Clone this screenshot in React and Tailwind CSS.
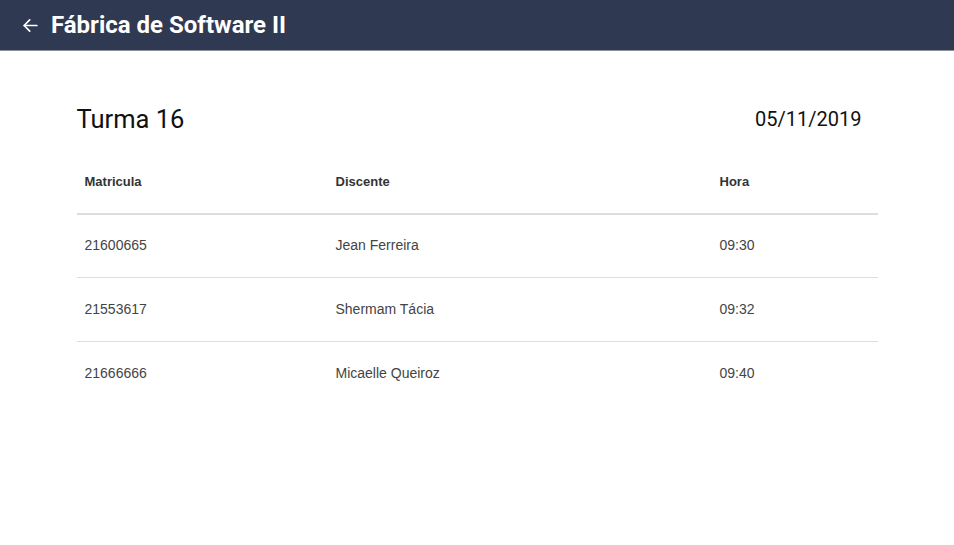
export default function App() {
  const rows = [
    ["21600665", "Jean Ferreira", "09:30"],
    ["21553617", "Shermam Tácia", "09:32"],
    ["21666666", "Micaelle Queiroz", "09:40"],
  ];
  return (
    <div className="min-h-[545px] w-full bg-white">
      <header className="flex h-[51px] items-center border-b border-[#8a8f9c] bg-[#2f3952] pl-[21px] text-white">
        <svg width="19" height="19" viewBox="0 0 24 24" className="mr-[11px]" fill="none" stroke="white" strokeWidth="2.2" strokeLinecap="round" strokeLinejoin="round">
          <path d="M20 12H4" />
          <path d="M11 5l-7 7 7 7" />
        </svg>
        <h1 className="text-[24px] font-bold font-['Roboto',sans-serif] leading-none">Fábrica de Software II</h1>
      </header>
      <main className="mx-auto w-[801px] pt-[53px]">
        <div className="flex items-center justify-between pr-[16px]">
          <h2 className="font-['Roboto',sans-serif] text-[25.5px] text-[#111] leading-[30px]">Turma 16</h2>
          <span className="font-['Roboto',sans-serif] text-[20px] text-[#111] leading-[30px]">05/11/2019</span>
        </div>
        <table className="mt-[16px] w-full border-collapse font-['Liberation_Sans',Arial,sans-serif] text-[14px] text-[#444]">
          <thead>
            <tr className="h-[64px] border-b-2 border-[#dddddd]">
              <th className="w-[251px] px-[8px] text-left text-[13px] font-bold text-[#333]">Matricula</th>
              <th className="w-[384px] px-[8px] text-left text-[13px] font-bold text-[#333]">Discente</th>
              <th className="px-[8px] text-left text-[13px] font-bold text-[#333]">Hora</th>
            </tr>
          </thead>
          <tbody>
            {rows.map((r, i) => (
              <tr key={i} className={`${i === 0 ? "h-[63px]" : "h-[64px]"} ${i < rows.length - 1 ? "border-b border-[#dddddd]" : ""}`}>
                <td className="px-[8px]">{r[0]}</td>
                <td className="px-[8px]">{r[1]}</td>
                <td className="px-[8px]">{r[2]}</td>
              </tr>
            ))}
          </tbody>
        </table>
      </main>
    </div>
  );
}
